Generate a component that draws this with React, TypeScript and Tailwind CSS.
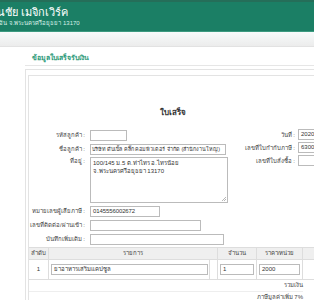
import React from 'react';

const font = { fontFamily: '"Liberation Sans", "Noto Sans", "DejaVu Sans", sans-serif' };

function Field({ label, value = '', w, h = 'h-[14px]' }: { label: string; value?: string; w: string; h?: string }) {
  return (
    <div className={`flex items-center ${h}`}>
      <div className="w-[61px] shrink-0 text-right pr-[5px] text-[6px] leading-[8px] text-[#444] whitespace-nowrap">{label}</div>
      <div className={`${w} h-[11px] shrink-0 border border-[#bbb] bg-white px-[2px] text-[6px] leading-[9px] text-[#333] whitespace-nowrap overflow-hidden tracking-[-0.1px]`}>{value}</div>
    </div>
  );
}

function RightField({ label, value = '' }: { label: string; value?: string }) {
  return (
    <div className="flex items-center h-[13px]">
      <div className="w-[62px] shrink-0 text-right pr-[3px] text-[6px] leading-[8px] text-[#444] whitespace-nowrap">{label}</div>
      <div className="w-[60px] h-[11px] shrink-0 border border-[#bbb] bg-white px-[2px] text-[6px] leading-[9px] text-[#333] whitespace-nowrap overflow-hidden">{value}</div>
    </div>
  );
}

export default function App() {
  return (
    <div className="w-[314px] h-[300px] overflow-hidden bg-white" style={font}>
      {/* header */}
      <div className="h-[32px] bg-[#1b7f65] border-t-2 border-[#256e59] border-b border-b-[#3c9a80] overflow-hidden">
        <div className="-ml-[40px] pt-[3px] text-white">
          <div className="text-[11px] leading-[14px] whitespace-nowrap">บริษัท ชนชัย เมจิกเวิร์ค</div>
          <div className="-ml-[12px] text-[6px] leading-[9px] whitespace-nowrap text-[#d8efe8]">ต.บ้านเลน อ.บางปะอิน จ.พระนครศรีอยุธยา 13170</div>
        </div>
      </div>
      <div className="h-[15px] bg-gradient-to-b from-[#f7fbfb] to-[#ececec] border-b border-[#e2e2e2]" />

      <div className="pl-[25px]">
        <div className="pt-[6px] pb-[3px] pl-[7px] border-b border-[#e6e6e6] text-[7px] leading-[9px] font-bold text-[#2f9c7b] whitespace-nowrap">ข้อมูลใบเสร็จรับเงิน</div>
        <div className="mt-[3px] border-l border-t border-[#e3e3e3] pl-[2px] pt-[5px]">
          <div className="border-l border-t border-[#e3e3e3] w-[300px]">
            <div className="w-[288px] text-center pt-[32px] text-[8px] leading-[10px] font-bold text-[#333]">ใบเสร็จ</div>

            <div className="flex pt-[10px]">
              <div className="w-[208px] shrink-0">
                <Field label="รหัสลูกค้า :" w="w-[37px]" />
                <div className="flex items-center h-[14px]">
                  <div className="w-[61px] shrink-0 text-right pr-[5px] text-[6px] leading-[8px] text-[#444] whitespace-nowrap">ชื่อลูกค้า :</div>
                  <div className="w-[136px] h-[11px] shrink-0 border border-[#bbb] bg-white px-[1px] text-[5.4px] leading-[9px] text-[#333] whitespace-nowrap overflow-hidden">บริษัท ดับเบิ้ล คลิ๊ก คอมพิวเตอร์ จำกัด (สำนักงานใหญ่)</div>
                </div>
                <div className="flex pt-[1px]">
                  <div className="w-[61px] shrink-0 text-right pr-[5px] text-[6px] leading-[8px] text-[#444]">ที่อยู่ :</div>
                  <div className="relative w-[138px] h-[46px] shrink-0 border border-[#bbb] px-[2px] pt-[1px] text-[6px] leading-[8px] text-[#333]">
                    100/145 ม.5 ต.ท่าไทร อ.ไทรน้อย<br />จ.พระนครศรีอยุธยา 13170
                    <svg className="absolute right-[1px] bottom-[1px]" width="5" height="5" viewBox="0 0 5 5">
                      <path d="M5 1 L1 5 M5 3 L3 5" stroke="#999" strokeWidth="0.7" />
                    </svg>
                  </div>
                </div>
                <div className="pt-[1px]">
                  <Field label="หมายเลขผู้เสียภาษี :" w="w-[70px]" value="0145556002672" />
                  <Field label="เลขที่ติดต่อ/ผ่านเข้า :" w="w-[111px]" />
                  <Field label="บันทึกเพิ่มเติม :" w="w-[134px]" />
                </div>
              </div>
              <div className="-ml-[1px]">
                <RightField label="วันที่ :" value="2020-06-15" />
                <RightField label="เลขที่ใบกำกับภาษี :" value="630001" />
                <RightField label="เลขที่ใบสั่งซื้อ :" />
              </div>
            </div>

            {/* table */}
            <div className="mt-[1px] flex h-[13px] bg-[#efefef] border-t border-b border-[#ddd] text-[6px] text-[#444]">
              <div className="w-[20px] text-center border-r border-[#ddd] leading-[11px]">ลำดับ</div>
              <div className="w-[169px] text-center border-r border-[#ddd] leading-[11px]">รายการ</div>
              <div className="w-[39px] text-center border-r border-[#ddd] leading-[11px]">จำนวน</div>
              <div className="w-[46px] text-center border-r border-[#ddd] leading-[11px]">ราคา/หน่วย</div>
              <div className="w-[20px]" />
            </div>
            <div className="flex h-[20px] border-b border-[#ddd] text-[6px] text-[#333]">
              <div className="w-[20px] text-center border-r border-[#ddd] leading-[19px]">1</div>
              <div className="w-[161px] flex items-center border-r border-[#ddd]">
                <div className="ml-[2px] w-[157px] h-[11px] border border-[#bbb] px-[2px] leading-[9px] whitespace-nowrap">ยาอาหารเสริมแคปซูล</div>
              </div>
              <div className="w-[8px] border-r border-[#ddd]" />
              <div className="w-[39px] flex items-center border-r border-[#ddd] px-[2px]">
                <div className="w-full h-[11px] border border-[#bbb] px-[2px] leading-[9px]">1</div>
              </div>
              <div className="w-[46px] flex items-center border-r border-[#ddd] px-[2px]">
                <div className="w-full h-[11px] border border-[#bbb] px-[2px] leading-[9px]">2000</div>
              </div>
            </div>
            <div className="w-[274px] text-right text-[6px] text-[#444] leading-[11px] border-b border-[#eee]">รวมเงิน</div>
            <div className="w-[274px] text-right text-[6px] text-[#444] leading-[11px]">ภาษีมูลค่าเพิ่ม 7%</div>
          </div>
        </div>
      </div>
    </div>
  );
}
